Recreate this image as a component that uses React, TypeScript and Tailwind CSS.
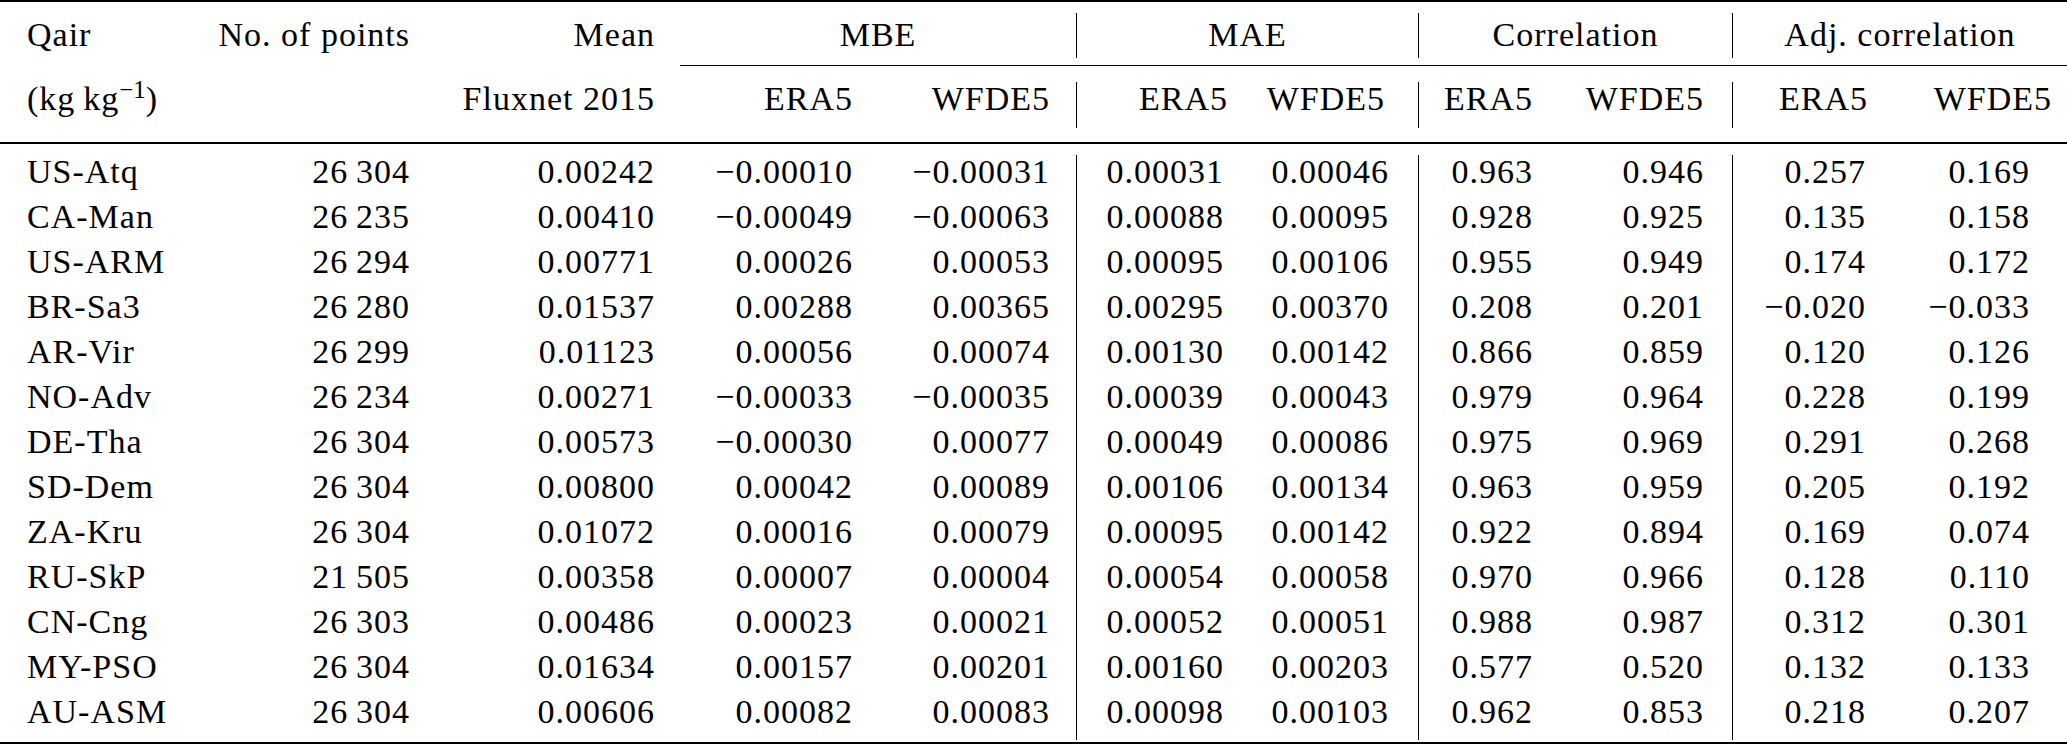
import React from "react";

const rows: string[][] = [
  ["US-Atq", "26\u2009304", "0.00242", "\u22120.00010", "\u22120.00031", "0.00031", "0.00046", "0.963", "0.946", "0.257", "0.169"],
  ["CA-Man", "26\u2009235", "0.00410", "\u22120.00049", "\u22120.00063", "0.00088", "0.00095", "0.928", "0.925", "0.135", "0.158"],
  ["US-ARM", "26\u2009294", "0.00771", "0.00026", "0.00053", "0.00095", "0.00106", "0.955", "0.949", "0.174", "0.172"],
  ["BR-Sa3", "26\u2009280", "0.01537", "0.00288", "0.00365", "0.00295", "0.00370", "0.208", "0.201", "\u22120.020", "\u22120.033"],
  ["AR-Vir", "26\u2009299", "0.01123", "0.00056", "0.00074", "0.00130", "0.00142", "0.866", "0.859", "0.120", "0.126"],
  ["NO-Adv", "26\u2009234", "0.00271", "\u22120.00033", "\u22120.00035", "0.00039", "0.00043", "0.979", "0.964", "0.228", "0.199"],
  ["DE-Tha", "26\u2009304", "0.00573", "\u22120.00030", "0.00077", "0.00049", "0.00086", "0.975", "0.969", "0.291", "0.268"],
  ["SD-Dem", "26\u2009304", "0.00800", "0.00042", "0.00089", "0.00106", "0.00134", "0.963", "0.959", "0.205", "0.192"],
  ["ZA-Kru", "26\u2009304", "0.01072", "0.00016", "0.00079", "0.00095", "0.00142", "0.922", "0.894", "0.169", "0.074"],
  ["RU-SkP", "21\u2009505", "0.00358", "0.00007", "0.00004", "0.00054", "0.00058", "0.970", "0.966", "0.128", "0.110"],
  ["CN-Cng", "26\u2009303", "0.00486", "0.00023", "0.00021", "0.00052", "0.00051", "0.988", "0.987", "0.312", "0.301"],
  ["MY-PSO", "26\u2009304", "0.01634", "0.00157", "0.00201", "0.00160", "0.00203", "0.577", "0.520", "0.132", "0.133"],
  ["AU-ASM", "26\u2009304", "0.00606", "0.00082", "0.00083", "0.00098", "0.00103", "0.962", "0.853", "0.218", "0.207"],
];

const colCls: string[] = [
  "pl-[27px] justify-start",
  "pr-[20px] justify-end",
  "pr-[25px] justify-end",
  "pr-[17px] justify-end",
  "pr-[26px] justify-end border-r border-black",
  "pr-[26px] justify-end",
  "pr-[29px] justify-end border-r border-black",
  "pr-[27px] justify-end",
  "pr-[28px] justify-end border-r border-black",
  "pr-[24px] justify-end",
  "pr-[37px] justify-end",
];

const grid =
  "grid grid-cols-[250px_180px_250px_190px_207px_173px_169px_141px_173px_157px_177px]";

const h1 = "flex h-[45px] leading-[43px] pb-[2px]";
const h2 = "flex h-[46px] leading-[33px] pb-[13px]";

export default function App() {
  return (
    <div
      className="w-[2067px] h-[752px] bg-white text-black text-[34px] tracking-[1px] whitespace-nowrap"
      style={{ fontFamily: '"Liberation Serif", "Times New Roman", serif' }}
    >
      <div className="h-[2px] bg-black" />
      <div className="h-[11px]" />
      {/* Header row 1 */}
      <div className={grid}>
        <div className={`${h1} pl-[27px] justify-start`}>Qair</div>
        <div className={`${h1} pr-[20px] justify-end`}>No. of points</div>
        <div className={`${h1} pr-[25px] justify-end`}>Mean</div>
        <div className={`${h1} col-span-2 justify-center border-r border-black`}>MBE</div>
        <div className={`${h1} col-span-2 justify-center border-r border-black`}>MAE</div>
        <div className={`${h1} col-span-2 justify-center border-r border-black`}>Correlation</div>
        <div className={`${h1} col-span-2 justify-center`}>Adj. correlation</div>
      </div>
      <div className="h-[7px]" />
      <div className="ml-[680px] h-px bg-black" />
      <div className="h-[16px]" />
      {/* Header row 2 */}
      <div className={grid}>
        <div className={`${h2} pl-[27px] justify-start`}>
          <span>
            (kg{"\u2009"}kg<sup className="text-[25px] tracking-normal">{"\u2212"}1</sup>)
          </span>
        </div>
        <div className={h2} />
        <div className={`${h2} pr-[25px] justify-end`}>Fluxnet 2015</div>
        <div className={`${h2} pr-[17px] justify-end`}>ERA5</div>
        <div className={`${h2} pr-[26px] justify-end border-r border-black`}>WFDE5</div>
        <div className={`${h2} pr-[22px] justify-end`}>ERA5</div>
        <div className={`${h2} pr-[33px] justify-end border-r border-black`}>WFDE5</div>
        <div className={`${h2} pr-[27px] justify-end`}>ERA5</div>
        <div className={`${h2} pr-[28px] justify-end border-r border-black`}>WFDE5</div>
        <div className={`${h2} pr-[22px] justify-end`}>ERA5</div>
        <div className={`${h2} pr-[15px] justify-end`}>WFDE5</div>
      </div>
      <div className="h-[14px]" />
      <div className="h-[2px] bg-black" />
      <div className="h-[11px]" />
      {/* Data rows */}
      {rows.map((r, i) => (
        <div key={i} className={grid}>
          {r.map((v, j) => (
            <div key={j} className={`flex h-[45px] leading-[33px] pb-[12px] ${colCls[j]}`}>
              {v}
            </div>
          ))}
        </div>
      ))}
      <div className="h-[2px]" />
      <div className="h-[2px] bg-black" />
    </div>
  );
}
